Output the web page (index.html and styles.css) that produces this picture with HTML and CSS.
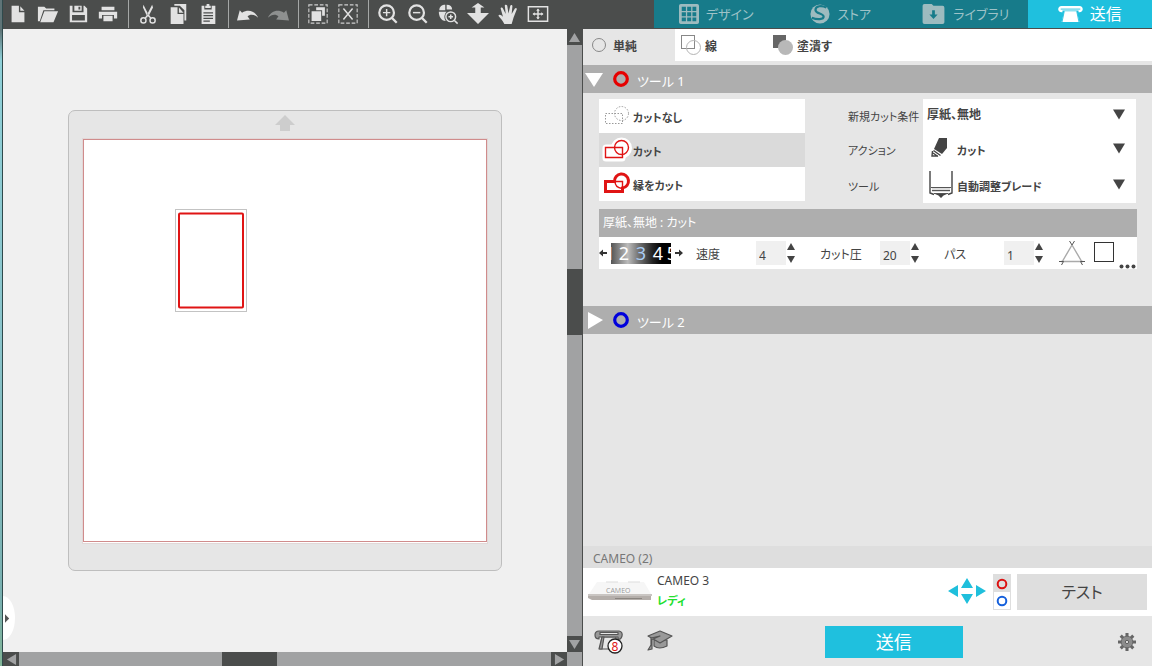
FILE: index.html
```html
<!DOCTYPE html>
<html lang="ja">
<head>
<meta charset="utf-8">
<meta name="viewport" content="width=device-width, initial-scale=1">
<title>送信</title>
<link rel="stylesheet" href="styles.css">
</head>
<body>
<div class="window">
  <header class="topbar">
    <div class="toolbar" role="toolbar" aria-label="ツールバー">
      <div class="tool-group">
        <button class="tool" aria-label="新規"><svg viewBox="0 0 24 24"><path fill-rule="evenodd" d="M5 3h8v7h6v11H5z M14.500 3.500l4.500 5h-4.500z"/></svg></button>
        <button class="tool" aria-label="開く"><svg viewBox="0 0 24 24"><path d="M1 20V4h7l2 2h9v2H7L3 20z M8 9h15l-5 12H3.500z"/></svg></button>
        <button class="tool" aria-label="保存"><svg viewBox="0 0 24 24"><path fill-rule="evenodd" d="M3 3h3v7h12V3h1l3 3v15H3z M5.500 13v6h14v-6z M8 3h8v5.500H8z M12.500 4v3h2V4z"/></svg></button>
        <button class="tool" aria-label="印刷"><svg viewBox="0 0 24 24"><path d="M5 4h14v4H5z M2 9.500h20V17h-3.500v-4h-13v4H2z M7 14h10v6H7z"/></svg></button>
      </div>
      <div class="tool-group">
        <button class="tool" aria-label="切り取り"><svg viewBox="0 0 24 24"><path d="M7 2l6.500 12.500-2 1L6.500 5z M16.500 2l-6.500 12.500 2 1L17.500 5z"/><g class="stroke"><circle cx="7" cy="19" r="2.800"/><circle cx="17" cy="19" r="2.800"/><path d="M9 16.500l3-3.500 3 3.500"/></g></svg></button>
        <button class="tool" aria-label="コピー"><svg viewBox="0 0 24 24"><path fill-rule="evenodd" d="M8 1h13v18h-2V8l-5-5H8z M4 4.500h7.500V12H18v11H4z M13 5l5 5.500h-5z"/></svg></button>
        <button class="tool" aria-label="貼り付け"><svg viewBox="0 0 24 24"><path fill-rule="evenodd" d="M5 3h3v4h8V3h4v20H5z M7 10v1.400h10.500V10z M7 13v1.400h10.500V13z M7 16v1.400h10.500V16z M7 19v1.400h7V19z M10.500 1h3v2H15v2.500H9V3h1.500z"/></svg></button>
      </div>
      <div class="tool-group">
        <button class="tool" aria-label="元に戻す"><svg viewBox="0 0 24 24"><path d="M0 19L3 8l2.500 2.500c7-4 14-2 17.500 5.500-4-4-9-4-11.500-1.500L14 18z"/></svg></button>
        <button class="tool tool-off" aria-label="やり直す" disabled><svg viewBox="0 0 24 24"><path d="M24 19L21 8l-2.500 2.500C11.500 6.500 4.500 8.500 1 16c4-4 9-4 11.500-1.500L10 18z"/></svg></button>
      </div>
      <div class="tool-group">
        <button class="tool" aria-label="すべて選択"><svg viewBox="0 0 24 24"><rect class="dash" x="2" y="2" width="20" height="20"/><path d="M10 4.500h9.500V14h-3V8H10z M5 9h10.500v10.500H5z"/></svg></button>
        <button class="tool" aria-label="選択解除"><svg viewBox="0 0 24 24"><rect class="dash" x="2" y="2" width="20" height="20"/><path class="stroke" d="M7 6l10 12M17 6L7 18"/></svg></button>
      </div>
      <div class="tool-group tool-group-last">
        <button class="tool" aria-label="拡大"><svg viewBox="0 0 24 24"><g class="stroke heavy"><circle cx="10.500" cy="10.500" r="8"/><path d="M16.500 16.500l5 5"/></g><path class="stroke" d="M6.500 10.500h8M10.500 6.500v8"/></svg></button>
        <button class="tool" aria-label="縮小"><svg viewBox="0 0 24 24"><g class="stroke heavy"><circle cx="10.500" cy="10.500" r="8"/><path d="M16.500 16.500l5 5"/></g><path class="stroke" d="M6.500 10.500h8"/></svg></button>
        <button class="tool" aria-label="選択範囲を拡大"><svg viewBox="0 0 24 24"><path d="M9 2v6H2.500c0-4 3-6 6.500-6z M10.500 2c4 0 6 2 6 5h-6z M2 9.500h8.500c-3 3-3 7-1 10-5 0-7.500-5-7.500-10z"/><g class="stroke"><circle cx="15" cy="15" r="5.300"/><path d="M19 19l3.500 3.500M12.500 15h5M15 12.500v5"/></g></svg></button>
        <button class="tool" aria-label="ズーム"><svg viewBox="0 0 24 24"><path d="M12 0l7 5h-4v6h9L12 23 0 11h9V5H5z"/></svg></button>
        <button class="tool" aria-label="パン"><svg viewBox="0 0 24 24"><path d="M8 23c-2-4-4-6-6.500-9 1-2 3-1 5 1L4 6c0-1.600 2-1.600 2.500 0l3 6L8.500 3c0-1.600 2.200-1.600 2.700 0l1.300 8.500L14.500 3c.5-1.500 2.500-1 2.300.5L16 12l3.500-6c1-1.200 2.500-.5 2 1l-3.500 9-2 7z"/></svg></button>
        <button class="tool" aria-label="全体表示"><svg viewBox="0 0 24 24"><path class="stroke" d="M1.500 4h21v16h-21z M12 7v10 M7 12h10"/><path d="M12 6l2 2.500h-4z M12 18l2-2.500h-4z M6 12l2.500-2v4z M18 12l-2.500-2v4z"/></svg></button>
      </div>
    </div>
    <nav class="tabs">
      <a class="tab" href="#design"><svg class="tab-icon" viewBox="0 0 22 22"><path fill-rule="evenodd" d="M2 0h18v0a2 2 0 0 1 2 2v18a2 2 0 0 1-2 2H2a2 2 0 0 1-2-2V2a2 2 0 0 1 2-2z M3 3v4.600h4.600V3z M9 3v4.600h4.400V3z M14.800 3v4.600H19V3z M3 9v4.400h4.600V9z M9 9v4.400h4.400V9z M14.800 9v4.400H19V9z M3 14.800V19h4.600v-4.200z M9 14.800V19h4.400v-4.200z M14.800 14.800V19H19v-4.200z"/></svg>デザイン</a>
      <a class="tab" href="#store"><svg class="tab-icon" viewBox="0 0 22 22"><circle cx="11" cy="11" r="10.500"/><path class="cut" d="M18 4c-5-3-12-2-12 2.500 0 4.500 9 3.500 9 7.500 0 3-7 3.500-13 1"/></svg>ストア</a>
      <a class="tab" href="#library"><svg class="tab-icon tab-icon-wide" viewBox="0 0 24 22"><path fill-rule="evenodd" d="M2 0h8l2 2h10a2 2 0 0 1 2 2v16a2 2 0 0 1-2 2H2a2 2 0 0 1-2-2V2a2 2 0 0 1 2-2z M10.500 7v4.500H7.500l4.500 5 4.500-5h-3V7z"/></svg>ライブラリ</a>
      <a class="tab tab-active" href="#send" aria-current="page"><svg class="tab-icon tab-icon-wide" viewBox="0 0 28 20"><path d="M4 1h20c5 0 5 7 0 7h-1v-2H5v2H4c-5 0-5-7 0-7z M7 7h14l3 12H4z"/><path class="slot" d="M3 4.500h22M7 7L4.500 19M21 7l2.500 12"/></svg><span>送信</span></a>
    </nav>
  </header>

  <main class="workspace">
    <section class="canvas" aria-label="キャンバス">
      <div class="stage">
        <div class="mat">
          <svg class="mat-arrow" viewBox="0 0 20 16"><path d="M10 0l10 10h-5v6H5v-6H0z"/></svg>
          <svg class="page" viewBox="0 0 406 406">
            <rect class="page-sheet" x="0.500" y="0.500" width="405" height="405"/>
            <rect class="page-edge" x="1.500" y="1.500" width="403" height="402"/>
            <rect class="bounds" x="93.500" y="71.500" width="71" height="102"/>
            <rect class="shape" x="97" y="75.500" width="64" height="94" rx="1"/>
          </svg>
        </div>
        <button class="drawer" aria-label="パネルを開く"><svg viewBox="0 0 6 10"><path d="M0 0l5 5-5 5z"/></svg></button>
      </div>
      <div class="vbar">
        <button class="bar-btn" aria-label="上へ"><svg viewBox="0 0 12 12"><path d="M6 1l6 10H0z"/></svg></button>
        <div class="track"><i class="run v-before"></i><i class="thumb v-thumb"></i><i class="run v-after"></i></div>
        <button class="bar-btn" aria-label="下へ"><svg viewBox="0 0 12 12"><path d="M6 11l6-10H0z"/></svg></button>
      </div>
      <div class="hbar">
        <button class="bar-btn" aria-label="左へ"><svg viewBox="0 0 12 12"><path d="M1 6l10-6v12z"/></svg></button>
        <div class="track"><i class="run h-before"></i><i class="thumb h-thumb"></i><i class="run h-after"></i></div>
        <button class="bar-btn" aria-label="右へ"><svg viewBox="0 0 12 12"><path d="M11 6L1 0v12z"/></svg></button>
      </div>
    </section>

    <aside class="panel">
      <div class="modes">
        <button class="mode mode-active"><svg class="icon14" viewBox="0 0 14 14"><circle class="thin" cx="7" cy="7" r="6.500"/></svg><span class="low">単純</span></button>
        <button class="mode"><svg class="icon20" viewBox="0 0 20 20"><rect class="thin" x="0.500" y="0.500" width="13" height="13"/><circle class="thin pale" cx="12.500" cy="12.500" r="7"/></svg><span class="low">線</span></button>
        <button class="mode"><svg class="icon20" viewBox="0 0 20 20"><path fill="#666" d="M0 0h13v13H0z"/><circle cx="12.500" cy="12.500" r="7.500" fill="#b8b8b8"/></svg><span class="low">塗潰す</span></button>
      </div>

      <button class="section" aria-expanded="true"><svg class="icon18" viewBox="0 0 18 16"><path fill="#fff" d="M0 2h18L9 16z"/></svg><svg class="ring" viewBox="0 0 16 16"><circle cx="8" cy="8" r="6.300" stroke="#e60000"/></svg><span class="low">ツール 1</span></button>

      <div class="section-body">
        <div class="settings">
          <div class="cutlist">
            <button class="cut-option"><svg viewBox="0 0 28 28"><g class="dotted"><path d="M2.500 11.500h17v10h-17z"/><circle cx="18.500" cy="11.500" r="7"/></g></svg><span class="low">カットなし</span></button>
            <button class="cut-option cut-active"><svg viewBox="0 0 28 28"><g class="halo"><path d="M3 12h16v10H3z"/><circle cx="18.500" cy="12" r="7"/></g><g class="red"><path d="M2.500 11.500h17v10h-17z"/><circle cx="18.500" cy="11.500" r="7"/></g></svg><span class="low">カット</span></button>
            <button class="cut-option"><svg viewBox="0 0 28 28"><g class="red"><path d="M12 11.500h7.500v10M12 11.500q0 6 7 7"/><path class="fat" d="M11.500 11.500h-9v10h17v-3.500a7 7 0 1 0-8-6.500z"/></g></svg><span class="low">縁をカット</span></button>
          </div>
          <div class="fields">
            <label class="low" for="material">新規カット条件</label>
            <div class="field field-first"><select id="material"><option>厚紙、無地</option></select><svg class="caret" viewBox="0 0 12 10"><path d="M0 0h12L6 10z"/></svg></div>
            <label class="low" for="action">アクション</label>
            <div class="field with-icon"><svg class="field-icon" viewBox="0 0 24 28"><path d="M10 3h8v10l-5 6-8-5z"/><path class="ink" d="M4.500 15.500l7 5M4 18l5 3.500M3.500 16l-.5 5 6 0"/></svg><select id="action"><option>カット</option></select><svg class="caret" viewBox="0 0 12 10"><path d="M0 0h12L6 10z"/></svg></div>
            <label class="low" for="tool">ツール</label>
            <div class="field with-icon"><svg class="field-icon" viewBox="0 0 24 28"><path class="ink" d="M1 0v20M23 0v20M1 19v3l4 1.500M23 19v3l-4 1.500"/><path fill="#ddd" d="M3 17h18v4H3z"/><path class="hair" d="M2 16.500h20M3 19.500h18M5 22.500h14"/><path d="M6 23h12l-3.500 1.500L12 27l-2.500-2.500z"/></svg><select id="tool"><option>自動調整ブレード</option></select><svg class="caret" viewBox="0 0 12 10"><path d="M0 0h12L6 10z"/></svg></div>
          </div>
        </div>

        <h2 class="preset">厚紙、無地 : カット</h2>
        <div class="params">
          <button class="step" aria-label="前の刃"><svg viewBox="0 0 8 8"><path d="M0 4l4-3.500v2.500h4v2H4v2.500z"/></svg></button>
          <div class="dial"><span class="dial-end">1</span><span>2</span><span class="dial-now">3</span><span>4</span><span class="dial-end">5</span></div>
          <button class="step" aria-label="次の刃"><svg viewBox="0 0 8 8"><path d="M8 4L4 .5V3H0v2h4v2.500z"/></svg></button>
          <div class="param"><label class="low" for="speed">速度</label><input id="speed" value="4"><span class="spin"><button aria-label="速度を上げる"><svg viewBox="0 0 8 8"><path d="M4 0l4 7H0z"/></svg></button><button aria-label="速度を下げる"><svg viewBox="0 0 8 8"><path d="M4 8L0 1h8z"/></svg></button></span></div>
          <div class="param"><label class="low" for="force">カット圧</label><input id="force" value="20"><span class="spin"><button aria-label="カット圧を上げる"><svg viewBox="0 0 8 8"><path d="M4 0l4 7H0z"/></svg></button><button aria-label="カット圧を下げる"><svg viewBox="0 0 8 8"><path d="M4 8L0 1h8z"/></svg></button></span></div>
          <div class="param"><label class="low" for="pass">パス</label><input id="pass" value="1"><span class="spin"><button aria-label="パスを増やす"><svg viewBox="0 0 8 8"><path d="M4 0l4 7H0z"/></svg></button><button aria-label="パスを減らす"><svg viewBox="0 0 8 8"><path d="M4 8L0 1h8z"/></svg></button></span></div>
          <svg class="overcut" viewBox="0 0 26 24"><path class="soft" d="M13 4L3 21M13 4l10 17M2 20.500h22"/><path class="hair" d="M10.500 0L13 4l2.500-4M0 20.500h4.500L2.500 24M26 20.500h-4.500l2 3.500"/></svg>
          <input class="check" type="checkbox" aria-label="ラインセグメントオーバーカット">
          <button class="more" aria-label="詳細"><svg viewBox="0 0 17 5"><circle cx="2.500" cy="2.500" r="2"/><circle cx="8.500" cy="2.500" r="2"/><circle cx="14.500" cy="2.500" r="2"/></svg></button>
        </div>
      </div>

      <button class="section" aria-expanded="false"><svg class="icon18" viewBox="0 0 18 18"><path fill="#fff" d="M3 1l15 8-15 9z"/></svg><svg class="ring" viewBox="0 0 16 16"><circle cx="8" cy="8" r="6.300" stroke="#0000dc"/></svg><span class="low">ツール 2</span></button>

      <div class="devices">
        <h2 class="devices-title">CAMEO (2)</h2>
        <div class="device">
          <svg class="device-photo" viewBox="0 0 64 24"><path d="M9 2h47l7 12H1z" fill="#f6f6f6"/><path d="M18 2h12M40 2h12" stroke="#ddd"/><path d="M0 14h64v2H0z" fill="#c9c5c2"/><path d="M0 16h63v4H4l-4-2z" fill="#b4aeaa"/><path d="M27 18.500h27" stroke="#8a8580"/><text x="18" y="13" class="device-mark" font-size="7">CAMEO</text></svg>
          <div class="device-info"><span>CAMEO 3</span><strong>レディ</strong></div>
          <button class="nudge" aria-label="位置を移動"><svg viewBox="0 0 38 26"><path d="M0 13l10-6v12z M38 13L28 7v12z M19 0l6 10H13z M19 26l6-10H13z"/></svg></button>
          <div class="slots">
            <button class="slot-on" aria-label="ツール 1"><svg viewBox="0 0 12 12"><circle cx="6" cy="6" r="4.300" stroke="#dc1010"/></svg></button>
            <button aria-label="ツール 2"><svg viewBox="0 0 12 12"><circle cx="6" cy="6" r="4.300" stroke="#1560dc"/></svg></button>
          </div>
          <button class="test">テスト</button>
        </div>
      </div>

      <footer class="actions">
        <div class="actions-side">
          <button class="plain" aria-label="デバイス"><svg class="icon30" viewBox="0 0 30 26"><path fill="#e6e6e6" stroke="#555" stroke-width="1.200" d="M8 8L6 20h16V8z"/><g class="gray"><path d="M5 2h20q4 1 3 5t-4 3v-2H5v2Q1 10 1 6t4-4z"/><path fill="#e6e6e6" d="M6 3.500h18v2H6z"/><path d="M8 8L5 20h3l2-12z"/></g><circle cx="21" cy="17" r="7" fill="#fff" stroke="#222" stroke-width="1.300"/><text x="21" y="21.500" text-anchor="middle" class="badge" font-size="12">8</text></svg></button>
          <button class="plain" aria-label="チュートリアル"><svg class="icon26" viewBox="0 0 26 24"><g class="gray"><path d="M7 10v6q5 4 13 0v-6z"/><path d="M1 6l12-5 12 5-12 7z"/><path d="M13 6L4 8v7l-3 5 4-1V9.500z"/></g></svg></button>
        </div>
        <button class="send">送信</button>
        <div class="actions-side actions-end">
          <button class="plain" aria-label="設定"><svg class="icon18" viewBox="0 0 20 20"><g class="teeth"><path d="M10 0v20M0 10h20M3 3l14 14M17 3L3 17"/></g><circle cx="10" cy="10" r="6.500" fill="#8c8c8c" stroke="#666"/><circle cx="10" cy="10" r="1.800" fill="#e6e6e6" stroke="#555"/></svg></button>
        </div>
      </footer>
    </aside>
  </main>
</div>
</body>
</html>
```
FILE: styles.css
```css
* { box-sizing: border-box; }

body {
  margin: 0;
  font: 12px/16px "Noto Sans", "Noto Sans CJK JP", sans-serif;
  font-feature-settings: "palt";
  color: #444;
}

button, input, select {
  font: inherit;
  font-feature-settings: inherit;
  color: inherit;
  border: 0;
  padding: 0;
  margin: 0;
  background: none;
}

button { display: flex; align-items: center; cursor: pointer; }
svg { display: block; flex: none; overflow: visible; }
h2 { margin: 0; font-weight: 400; }

/* Japanese labels sit slightly below the centre of their icons */
.low { padding-top: 3px; }

.window {
  min-height: 100vh;
  display: flex;
  flex-direction: column;
  padding-left: 3px;
  background:
    linear-gradient(#2f4a4c, #2f4a4c) 2px 0 / 1px 100% no-repeat,
    linear-gradient(#5f7477 0, #5f7477 30px, #8fd0d8 60px, #8ac4cb 50%, #79b0b0 90%, #82b596 100%) 0 0 / 2px 100% no-repeat,
    #f0f0f0;
}

/* Top bar */
.topbar {
  display: flex;
  justify-content: space-between;
  height: 29px;
  background: #4b4d4c;
  border-bottom: 1px solid #4b4d4c;
}
.toolbar { display: flex; }
.tool-group {
  display: flex;
  padding: 0 5px 0 4px;
  border-right: 1px solid #a5a7a6;
}
.tool-group:first-child { padding-left: 0; }
.tool-group-last { border-right: 0; }
.tool { width: 30px; justify-content: center; fill: #e2e2e2; }
.tool svg { width: 22px; height: 22px; }
.tool-off { fill: #8e908f; }
.stroke { fill: none; stroke: #e2e2e2; stroke-width: 1.6; }
.heavy { stroke-width: 2.4; }
.dash { fill: none; stroke: #d0d0d0; stroke-width: 1.2; stroke-dasharray: 4 2; }

.tabs { display: grid; grid-template-columns: repeat(4, 1fr); width: 498px; background: #177b8a; }
.tab {
  display: flex;
  align-items: center;
  justify-content: center;
  gap: 7px;
  font-size: 13px;
  color: #9ec3c8;
  fill: #9dbbbf;
  text-decoration: none;
}
.tab-active { background: #1fc0de; color: #fff; fill: #fff; font-size: 16px; }
.tab-icon { width: 20px; height: 20px; }
.tab-icon-wide { width: 25px; height: 20px; }
.cut { fill: none; stroke: #177b8a; stroke-width: 2.4; }
.slot { fill: none; stroke: #1fc0de; stroke-width: 1; }

/* Workspace */
.workspace {
  flex: 1;
  display: grid;
  grid-template-columns: minmax(0, 1fr) 570px;
}
.canvas {
  display: grid;
  grid-template: minmax(0, 1fr) 14px / minmax(0, 1fr) 15px;
  background: #a1a2a3;
}
.stage {
  position: relative;
  display: grid;
  place-items: center;
  background: #f0f0f0;
}
.mat {
  width: 434px;
  max-width: 90%;
  padding: 4px 13px 26px;
  background: #e6e6e6;
  border: 1px solid #bebebe;
  border-radius: 7px;
}
.mat-arrow { width: 20px; height: 16px; margin: 0 auto 7px; fill: #cdcdcd; }
.page { width: 100%; }
.page-sheet { fill: #fff; stroke: #e2d8d8; }
.page-edge { fill: none; stroke: #d08c8c; }
.bounds { fill: none; stroke: #c3c3c3; }
.shape { fill: none; stroke: #e01414; stroke-width: 2; }
.drawer {
  position: absolute;
  left: 0;
  bottom: 12px;
  width: 12px;
  height: 44px;
  padding-left: 2px;
  background: #fff;
  border-radius: 0 12px 12px 0 / 0 22px 22px 0;
}
.drawer svg { width: 5px; height: 9px; fill: #555; }

.vbar { display: flex; flex-direction: column; }
.hbar { display: flex; }
.bar-btn { width: 16px; height: 14px; justify-content: center; background: #4b4d4c; }
.vbar .bar-btn { width: 15px; height: 16px; }
.bar-btn svg { width: 11px; height: 11px; fill: #a1a2a3; }
.track { flex: 1; display: flex; }
.vbar .track { flex-direction: column; }
.thumb { background: #4b4d4c; }
.v-before { flex: 224; }
.v-thumb { flex: 66; }
.v-after { flex: 301; }
.h-before { flex: 203; }
.h-thumb { flex: 55; }
.h-after { flex: 274; }

/* Panel */
.panel {
  display: flex;
  flex-direction: column;
  background: #e6e6e6;
  border-left: 1px solid #4b4d4c;
}
.icon14 { width: 14px; height: 14px; }
.icon18 { width: 18px; height: 18px; }
.icon20 { width: 20px; height: 20px; }
.icon26 { width: 26px; height: 24px; }
.icon30 { width: 30px; height: 26px; }
.thin { fill: none; stroke: #888; }
.pale { stroke: #b4b4b4; }

.modes { display: flex; height: 32px; margin-bottom: 4px; background: #fff; }
.mode { width: 92px; padding-left: 6px; gap: 4px; font-weight: 700; }
.mode-active { padding-left: 9px; gap: 7px; background: #e6e6e6; }

.section {
  width: 100%;
  height: 28px;
  padding-left: 2px;
  gap: 10px;
  background: #aeaeae;
  color: #fff;
  font-size: 13px;
}
.section .ring { width: 16px; height: 16px; margin-right: -2px; fill: none; stroke-width: 3.2; }
.section-body { padding: 6px 15px 37px 16px; }

.settings { display: flex; align-items: flex-start; margin-bottom: 6px; }
.cutlist { width: 206px; background: #fff; }
.cut-option { width: 100%; height: 34px; padding-left: 4px; gap: 2px; font-size: 11px; font-weight: 700; }
.cut-option svg { width: 28px; height: 28px; fill: none; }
.cut-active { background: #dadada; }
.dotted { stroke: #999; stroke-dasharray: 1.5 1.5; }
.halo { stroke: #fff; stroke-width: 7; stroke-linejoin: round; fill: #fff; }
.red { stroke: #e01414; stroke-width: 1.4; }
.fat { stroke-width: 3; }

.fields {
  flex: 1;
  display: grid;
  grid-template: 32px 36px 36px / 75px 1fr;
  align-items: center;
  margin: 0 1px 0 43px;
  font-size: 11px;
}
.fields label { white-space: nowrap; }
.field {
  position: relative;
  display: flex;
  align-items: center;
  height: 100%;
  padding-left: 4px;
  background: #fff;
}
.field-first { font-size: 12px; }
.with-icon { padding-left: 6px; gap: 4px; }
.with-icon select { padding-top: 3px; }
.field-icon { width: 24px; height: 28px; fill: #444; }
.field select { flex: 1; height: 100%; appearance: none; font-weight: 700; }
.caret {
  position: absolute;
  right: 11px;
  top: calc(50% - 6px);
  width: 12px;
  height: 11px;
  fill: #444;
  pointer-events: none;
}
.ink { fill: none; stroke: #444; stroke-width: 1.4; }
.hair { fill: none; stroke: #555; stroke-width: 1; }
.soft { fill: none; stroke: #aaa; stroke-width: 1.4; }

.preset {
  height: 28px;
  padding-left: 4px;
  background: #aeaeae;
  color: #fff;
  font-size: 12px;
  line-height: 28px;
}
.params { display: flex; align-items: center; height: 32px; background: #fff; }
.step { width: 8px; }
.step svg { width: 8px; height: 8px; fill: #333; }
.dial {
  display: flex;
  justify-content: center;
  width: 60px;
  height: 21px;
  margin: 0 4px;
  overflow: hidden;
  background: linear-gradient(90deg, #555 0%, #bbb 28%, #777 45%, #222 70%, #000 85%);
  color: #fff;
  font-size: 18px;
  line-height: 21px;
}
.dial span { flex: none; width: 17px; text-align: center; }
.dial .dial-end { width: 11px; }
.dial .dial-now { color: #a9cdf5; }
.param { display: flex; align-items: center; width: 124px; }
.step + .param { margin-left: 13px; }
.param label { width: 60px; white-space: nowrap; }
.param input { width: 30px; height: 24px; padding: 4px 3px 0; background: #f0f0f0; }
.spin { display: grid; gap: 4px; padding-left: 1px; }
.spin svg { width: 8px; height: 8px; fill: #444; }
.overcut { width: 26px; height: 24px; margin-left: -9px; }
.check {
  appearance: none;
  width: 20px;
  height: 20px;
  margin: 0 5px 2px 9px;
  border: 1px solid #333;
  background: #fff;
}
.more { align-self: flex-end; }
.more svg { width: 17px; height: 5px; fill: #444; }

/* Devices */
.devices { margin-top: auto; }
.devices-title {
  padding: 5px 10px 1px;
  background: #dedede;
  color: #777;
  font-size: 12px;
}
.device {
  display: flex;
  align-items: center;
  height: 48px;
  padding: 0 5px;
  background: #fff;
}
.device-photo { width: 64px; height: 24px; }
.device-mark { fill: #999; font-family: "Open Sans", sans-serif; }
.device-info { flex: 1; display: grid; gap: 4px; padding: 0 0 2px 5px; }
.device-info strong { color: #22e02f; font-size: 11px; }
.nudge { padding-bottom: 3px; }
.nudge svg { width: 38px; height: 26px; fill: #1fbfdc; }
.slots { border: 1px solid #dedede; margin: 0 6px 0 7px; }
.slots button { width: 16px; height: 17px; justify-content: center; }
.slots .slot-on { background: #dedede; }
.slots svg { width: 12px; height: 12px; fill: none; stroke-width: 2; }
.test { width: 130px; height: 36px; justify-content: center; background: #dedede; font-size: 16px; }

/* Footer */
.actions { display: flex; align-items: center; height: 50px; padding: 2px 16px 0 11px; }
.actions-side { flex: 4; display: flex; gap: 23px; }
.actions-end { flex: 3; justify-content: flex-end; }
.gray { fill: #999; stroke: #555; stroke-width: 1.2; stroke-linejoin: round; }
.badge { fill: #e01414; font-family: "Noto Sans", sans-serif; }
.teeth { stroke: #666; stroke-width: 3.4; }
.send { width: 138px; height: 32px; justify-content: center; background: #1fc0de; color: #fff; font-size: 18px; }
```
